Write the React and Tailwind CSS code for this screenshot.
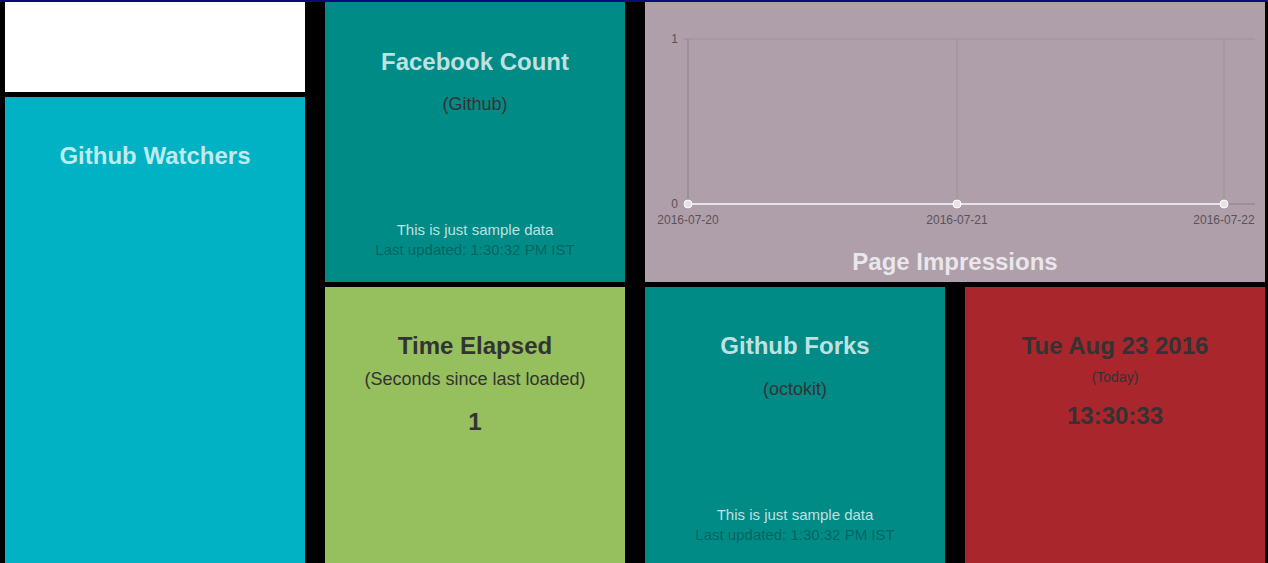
const font = { fontFamily: '"Liberation Sans", Arial, sans-serif' };

const Tile = ({ className = '', children }) => (
  <div className={`flex flex-col items-center text-center overflow-hidden ${className}`}>{children}</div>
);

const ImpressionsChart = () => {
  const x0 = 43;
  const x1 = 312;
  const x2 = 579;
  const top = 37;
  const bottom = 202;
  return (
    <svg width="620" height="240" className="block" style={font}>
      {/* grid */}
      <line x1={x0 - 5} y1={top} x2={610} y2={top} stroke="#a08f9b" strokeWidth="1" />
      <line x1={x0 - 5} y1={bottom} x2={610} y2={bottom} stroke="#8d7d89" strokeWidth="1" />
      <line x1={x0} y1={top} x2={x0} y2={bottom + 5} stroke="#8d7d89" strokeWidth="1" />
      <line x1={x1} y1={top} x2={x1} y2={bottom + 5} stroke="#a08f9b" strokeWidth="1" />
      <line x1={x2} y1={top} x2={x2} y2={bottom + 5} stroke="#a08f9b" strokeWidth="1" />
      <text x={x0 - 10} y={top + 4} textAnchor="end" fontSize="12" fill="#5a5356">1</text>
      <text x={x0 - 10} y={bottom + 4} textAnchor="end" fontSize="12" fill="#5a5356">0</text>
      {/* data */}
      <line x1={x0} y1={bottom} x2={x2} y2={bottom} stroke="#e8e2e6" strokeWidth="2" />
      {[x0, x1, x2].map((cx) => (
        <circle key={cx} cx={cx} cy={bottom} r="4" fill="#e8e2e6" stroke="#ffffff" strokeWidth="1" />
      ))}
      <text x={x0} y={bottom + 20} textAnchor="middle" fontSize="12" fill="#5a5356">2016-07-20</text>
      <text x={x1} y={bottom + 20} textAnchor="middle" fontSize="12" fill="#5a5356">2016-07-21</text>
      <text x={x2} y={bottom + 20} textAnchor="middle" fontSize="12" fill="#5a5356">2016-07-22</text>
    </svg>
  );
};

export default function App() {
  return (
    <div className="min-h-screen bg-black border-t-2 border-[#0b0a7c] overflow-hidden" style={font}>
      <div className="grid grid-cols-[300px_300px_300px_300px] grid-rows-[90px_185px_280px] gap-x-[20px] gap-y-[5px] pl-[5px]">
        {/* blank widget */}
        <div className="bg-white" />

        {/* facebook count */}
        <Tile className="row-span-2 bg-[#008b87] pt-[44px]">
          <h1 className="text-[24px] font-bold text-white/75 leading-[32px]">Facebook Count</h1>
          <p className="mt-[13px] text-[18px] text-[#333333]">(Github)</p>
          <div className="mt-auto mb-[22px]">
            <p className="text-[15px] text-white/75 leading-[20px]">This is just sample data</p>
            <p className="text-[15px] text-black/30 leading-[20px]">Last updated: 1:30:32 PM IST</p>
          </div>
        </Tile>

        {/* page impressions */}
        <Tile className="col-span-2 row-span-2 bg-[#ae9fab]">
          <ImpressionsChart />
          <h1 className="mt-[4px] text-[24px] font-bold text-white/75 leading-[32px]">Page Impressions</h1>
        </Tile>

        {/* github watchers */}
        <Tile className="row-span-2 bg-[#00b2c3] pt-[43px]">
          <h1 className="text-[24px] font-bold text-white/75 leading-[32px]">Github Watchers</h1>
        </Tile>

        {/* time elapsed */}
        <Tile className="bg-[#96bf5e] pt-[43px]">
          <h1 className="text-[24px] font-bold text-[#333333] leading-[32px]">Time Elapsed</h1>
          <p className="mt-[4px] text-[18px] text-[#333333]">(Seconds since last loaded)</p>
          <p className="mt-[11px] text-[24px] font-bold text-[#333333]">1</p>
        </Tile>

        {/* github forks */}
        <Tile className="bg-[#008b87] pt-[43px]">
          <h1 className="text-[24px] font-bold text-white/75 leading-[32px]">Github Forks</h1>
          <p className="mt-[14px] text-[18px] text-[#333333]">(octokit)</p>
          <div className="mt-auto mb-[22px]">
            <p className="text-[15px] text-white/75 leading-[20px]">This is just sample data</p>
            <p className="text-[15px] text-black/30 leading-[20px]">Last updated: 1:30:32 PM IST</p>
          </div>
        </Tile>

        {/* clock */}
        <Tile className="bg-[#a9262d] pt-[43px]">
          <h1 className="text-[24px] font-bold text-[#333333] leading-[32px]">Tue Aug 23 2016</h1>
          <p className="mt-[5px] text-[14px] text-[#333333]">(Today)</p>
          <p className="mt-[10px] text-[24px] font-bold text-[#333333]">13:30:33</p>
        </Tile>
      </div>
    </div>
  );
}
